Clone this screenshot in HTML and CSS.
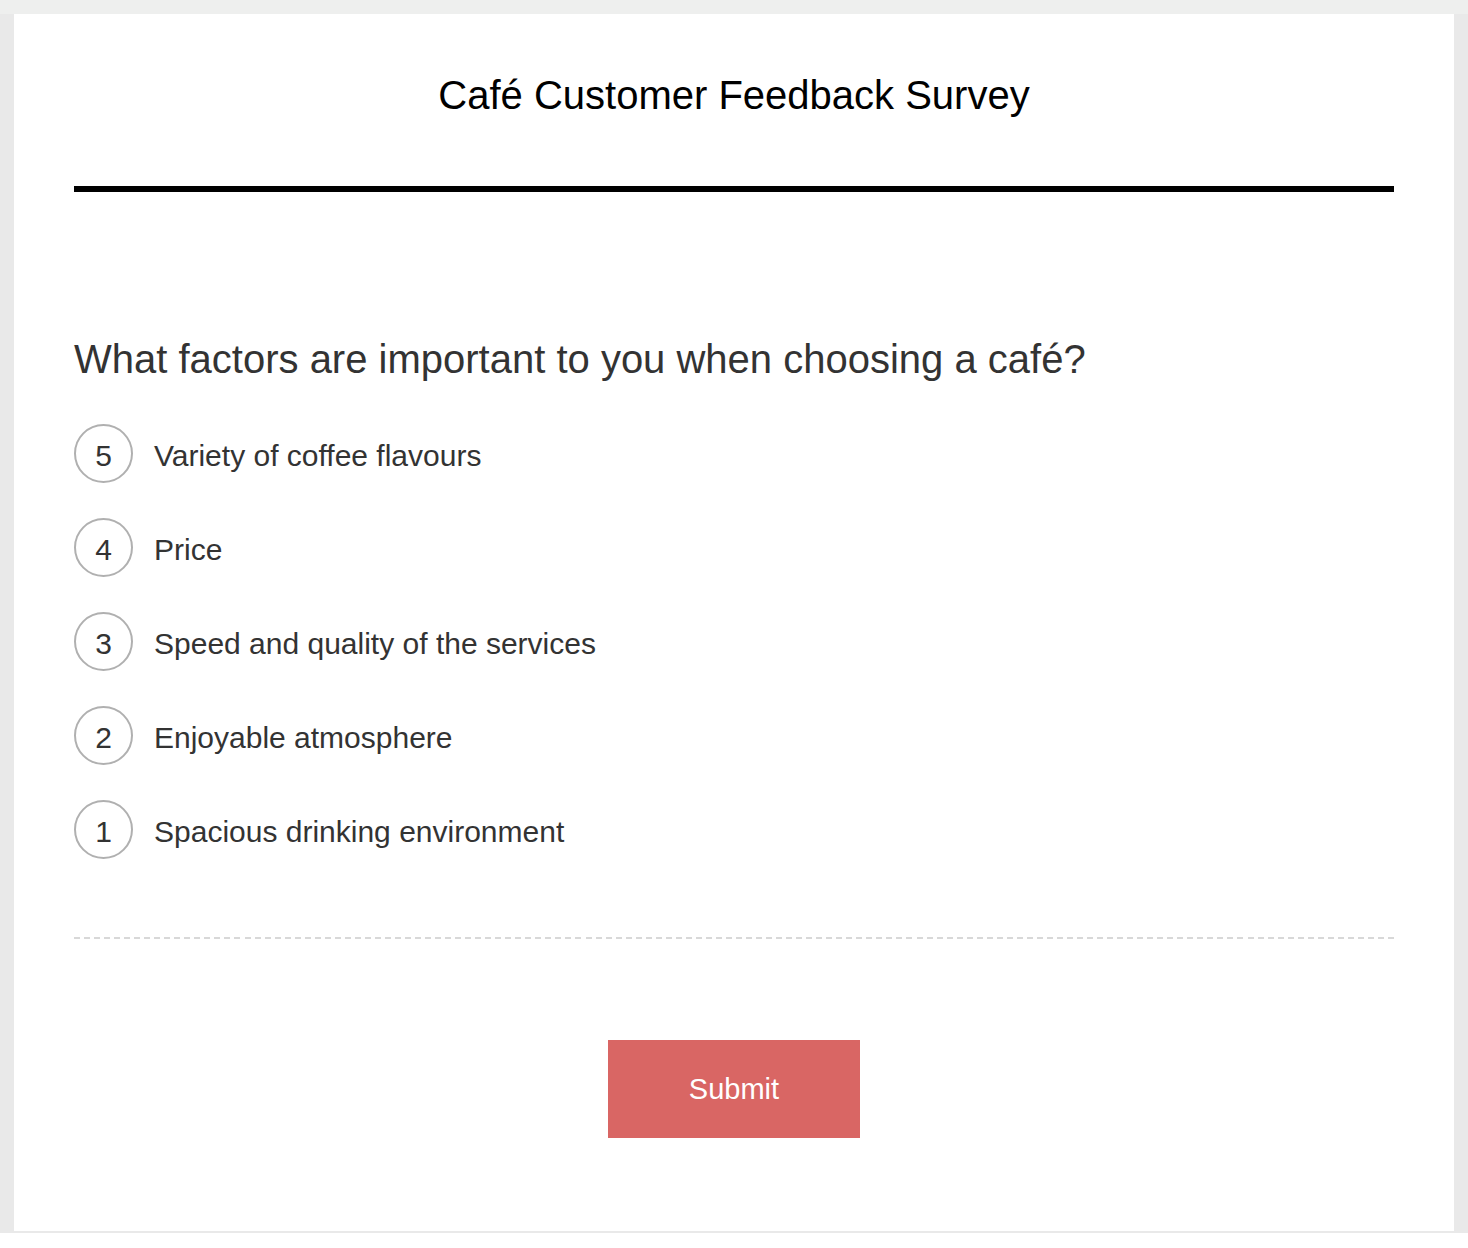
FILE: index.html
```html
<!DOCTYPE html>
<html lang="en">
<head>
<meta charset="utf-8">
<title>Café Customer Feedback Survey</title>
<link rel="stylesheet" href="styles.css">
</head>
<body>
<div class="page">
  <main class="card">
    <header class="header">
      <h1 class="title">Café Customer Feedback Survey</h1>
      <div class="rule"></div>
    </header>
    <section class="question">
      <h2 class="question-text">What factors are important to you when choosing a café?</h2>
      <ol class="ranking">
        <li class="rank-item"><span class="rank-num">5</span><span class="rank-label">Variety of coffee flavours</span></li>
        <li class="rank-item"><span class="rank-num">4</span><span class="rank-label">Price</span></li>
        <li class="rank-item"><span class="rank-num">3</span><span class="rank-label">Speed and quality of the services</span></li>
        <li class="rank-item"><span class="rank-num">2</span><span class="rank-label">Enjoyable atmosphere</span></li>
        <li class="rank-item"><span class="rank-num">1</span><span class="rank-label">Spacious drinking environment</span></li>
      </ol>
    </section>
    <div class="divider"></div>
    <div class="actions">
      <button class="submit" type="button">Submit</button>
    </div>
  </main>
</div>
</body>
</html>
```

FILE: styles.css
```css
html, body {
  margin: 0;
  padding: 0;
  background: #ffffff;
}

body {
  font-family: "Liberation Sans", Arial, sans-serif;
}

.page {
  background: #e9e9e9;
  border-top: 14px solid #eeefee;
  padding: 0 14px 2px;
}

.card {
  background: #ffffff;
  padding: 0 60px 93px;
  display: flex;
  flex-direction: column;
}

.header {
  padding-top: 58px;
  display: flex;
  flex-direction: column;
}

.title {
  margin: 0;
  font-size: 40px;
  line-height: 46px;
  font-weight: 400;
  color: #000000;
  text-align: center;
}

.rule {
  margin-top: 68px;
  height: 6px;
  background: #000000;
}

.question {
  margin-top: 144px;
}

.question-text {
  margin: 0;
  font-size: 40px;
  line-height: 46px;
  font-weight: 400;
  color: #333333;
}

.ranking {
  list-style: none;
  margin: 42px 0 0;
  padding: 0;
  display: flex;
  flex-direction: column;
  gap: 35px;
}

.rank-item {
  display: flex;
  align-items: center;
  gap: 21px;
}

.rank-num {
  box-sizing: border-box;
  width: 59px;
  height: 59px;
  padding-top: 4px;
  border: 2px solid #b0b0b0;
  border-radius: 50%;
  display: flex;
  align-items: center;
  justify-content: center;
  font-size: 30px;
  color: #333333;
  flex: none;
}

.rank-label {
  padding-top: 4px;
  font-size: 30px;
  color: #333333;
}

.divider {
  margin-top: 78px;
  height: 2px;
  background: repeating-linear-gradient(to right, #d8d8d8 0 6px, transparent 6px 10.03px);
}

.actions {
  margin-top: 101px;
  display: flex;
  justify-content: center;
}

.submit {
  width: 252px;
  height: 98px;
  border: none;
  border-radius: 0;
  background: #d96664;
  color: #ffffff;
  font-family: "Liberation Sans", Arial, sans-serif;
  font-size: 29px;
  padding: 0;
  cursor: pointer;
}
```
